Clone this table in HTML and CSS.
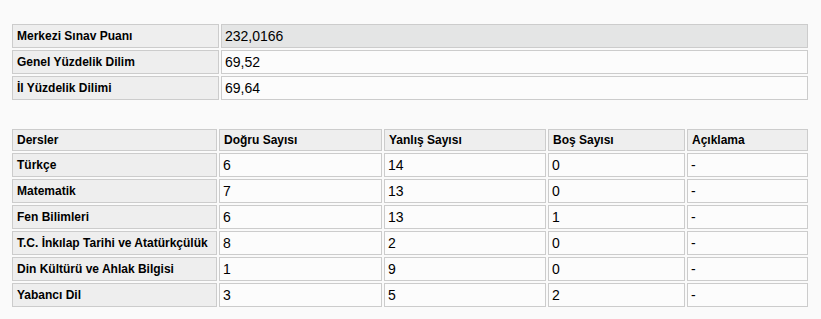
FILE: index.html
```html
<!DOCTYPE html>
<html lang="tr">
<head>
<meta charset="utf-8">
<title>Sınav Sonucu</title>
<link rel="stylesheet" href="styles.css">
</head>
<body>
<div class="page">
  <table class="grid summary">
    <colgroup><col class="c-label"><col></colgroup>
    <tr class="hl"><th>Merkezi Sınav Puanı</th><td>232,0166</td></tr>
    <tr><th>Genel Yüzdelik Dilim</th><td>69,52</td></tr>
    <tr><th>İl Yüzdelik Dilimi</th><td>69,64</td></tr>
  </table>

  <table class="grid lessons">
    <colgroup>
      <col class="c1"><col class="c2"><col class="c3"><col class="c4"><col class="c5">
    </colgroup>
    <tr class="head"><th>Dersler</th><th>Doğru Sayısı</th><th>Yanlış Sayısı</th><th>Boş Sayısı</th><th>Açıklama</th></tr>
    <tr><th>Türkçe</th><td>6</td><td>14</td><td>0</td><td>-</td></tr>
    <tr><th>Matematik</th><td>7</td><td>13</td><td>0</td><td>-</td></tr>
    <tr><th>Fen Bilimleri</th><td>6</td><td>13</td><td>1</td><td>-</td></tr>
    <tr><th>T.C. İnkılap Tarihi ve Atatürkçülük</th><td>8</td><td>2</td><td>0</td><td>-</td></tr>
    <tr><th>Din Kültürü ve Ahlak Bilgisi</th><td>1</td><td>9</td><td>0</td><td>-</td></tr>
    <tr><th>Yabancı Dil</th><td>3</td><td>5</td><td>2</td><td>-</td></tr>
  </table>
</div>
</body>
</html>
```

FILE: styles.css
```css
html, body {
  margin: 0;
  padding: 0;
  background: #fafafa;
}

.page {
  padding: 22px 0 0 10px;
  font-family: "Liberation Sans", Arial, sans-serif;
  color: #000;
}

.grid {
  width: 800px;
  table-layout: fixed;
  border-collapse: separate;
  border-spacing: 2px;
}

.grid th,
.grid td {
  box-sizing: border-box;
  height: 24px;
  padding: 0 4px;
  border: 1px solid #cccccc;
  text-align: left;
  vertical-align: middle;
  white-space: nowrap;
  overflow: hidden;
}

.grid th {
  background: #eeeeee;
  font-weight: bold;
  font-size: 12px;
}

.grid td {
  background: #fcfcfc;
  font-size: 14px;
  font-weight: normal;
  padding-left: 3px;
}

.summary .c-label { width: 207px; }
.summary tr.hl td { background: #e4e5e5; }

.lessons {
  margin-top: 25px;
}

.lessons .c1 { width: 205px; }
.lessons .c2 { width: 163px; }
.lessons .c3 { width: 162px; }
.lessons .c4 { width: 137px; }

.lessons tr.head th {
  height: 22px;
}
```
